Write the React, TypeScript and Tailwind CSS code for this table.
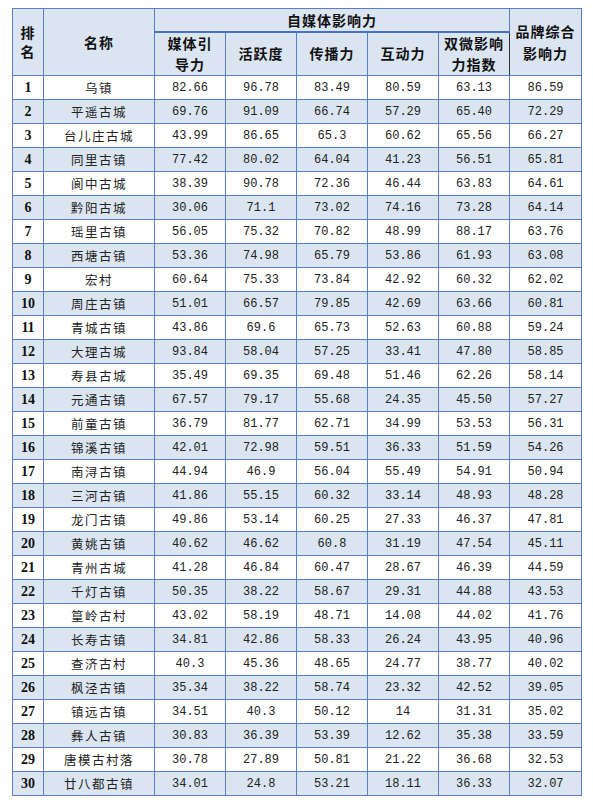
import React from "react";

const rows: [string, string, string, string, string, string, string][] = [
  ["乌镇", "82.66", "96.78", "83.49", "80.59", "63.13", "86.59"],
  ["平遥古城", "69.76", "91.09", "66.74", "57.29", "65.40", "72.29"],
  ["台儿庄古城", "43.99", "86.65", "65.3", "60.62", "65.56", "66.27"],
  ["同里古镇", "77.42", "80.02", "64.04", "41.23", "56.51", "65.81"],
  ["阆中古城", "38.39", "90.78", "72.36", "46.44", "63.83", "64.61"],
  ["黔阳古城", "30.06", "71.1", "73.02", "74.16", "73.28", "64.14"],
  ["瑶里古镇", "56.05", "75.32", "70.82", "48.99", "88.17", "63.76"],
  ["西塘古镇", "53.36", "74.98", "65.79", "53.86", "61.93", "63.08"],
  ["宏村", "60.64", "75.33", "73.84", "42.92", "60.32", "62.02"],
  ["周庄古镇", "51.01", "66.57", "79.85", "42.69", "63.66", "60.81"],
  ["青城古镇", "43.86", "69.6", "65.73", "52.63", "60.88", "59.24"],
  ["大理古城", "93.84", "58.04", "57.25", "33.41", "47.80", "58.85"],
  ["寿县古城", "35.49", "69.35", "69.48", "51.46", "62.26", "58.14"],
  ["元通古镇", "67.57", "79.17", "55.68", "24.35", "45.50", "57.27"],
  ["前童古镇", "36.79", "81.77", "62.71", "34.99", "53.53", "56.31"],
  ["锦溪古镇", "42.01", "72.98", "59.51", "36.33", "51.59", "54.26"],
  ["南浔古镇", "44.94", "46.9", "56.04", "55.49", "54.91", "50.94"],
  ["三河古镇", "41.86", "55.15", "60.32", "33.14", "48.93", "48.28"],
  ["龙门古镇", "49.86", "53.14", "60.25", "27.33", "46.37", "47.81"],
  ["黄姚古镇", "40.62", "46.62", "60.8", "31.19", "47.54", "45.11"],
  ["青州古城", "41.28", "46.84", "60.47", "28.67", "46.39", "44.59"],
  ["千灯古镇", "50.35", "38.22", "58.67", "29.31", "44.88", "43.53"],
  ["篁岭古村", "43.02", "58.19", "48.71", "14.08", "44.02", "41.76"],
  ["长寿古镇", "34.81", "42.86", "58.33", "26.24", "43.95", "40.96"],
  ["查济古村", "40.3", "45.36", "48.65", "24.77", "38.77", "40.02"],
  ["枫泾古镇", "35.34", "38.22", "58.74", "23.32", "42.52", "39.05"],
  ["镇远古镇", "34.51", "40.3", "50.12", "14", "31.31", "35.02"],
  ["彝人古镇", "30.83", "36.39", "53.39", "12.62", "35.38", "33.59"],
  ["唐模古村落", "30.78", "27.89", "50.81", "21.22", "36.68", "32.53"],
  ["廿八都古镇", "34.01", "24.8", "53.21", "18.11", "36.33", "32.07"],
];

const cjk = "font-['Noto_Sans_CJK_SC',sans-serif]";
const th = `border border-[#5a80c4] bg-[#dbe5f1] ${cjk} text-[14px] font-bold p-0 tracking-[1px] text-[#111]`;

export default function App() {
  return (
    <div className="bg-white w-[593px] h-[806px] pt-[8px] pl-[12px]">
      <table className="table-fixed border-collapse w-[569px]">
        <colgroup>
          <col className="w-[31px]" />
          <col className="w-[111px]" />
          <col className="w-[71px]" />
          <col className="w-[71px]" />
          <col className="w-[71px]" />
          <col className="w-[71px]" />
          <col className="w-[71px]" />
          <col className="w-[72px]" />
        </colgroup>
        <thead>
          <tr className="h-[23px]">
            <th rowSpan={2} className={`${th} leading-[19px]`}>
              排<br />名
            </th>
            <th rowSpan={2} className={th}>
              名称
            </th>
            <th colSpan={5} className={`${th} border-b-2 border-b-[#4472c4] leading-[20px]`}>
              自媒体影响力
            </th>
            <th rowSpan={2} className={`${th} border-l-[#333] leading-[22px]`}>
              品牌综合<br />影响力
            </th>
          </tr>
          <tr className="h-[44px]">
            <th className={`${th} leading-[21px]`}>
              媒体引<br />导力
            </th>
            <th className={th}>活跃度</th>
            <th className={th}>传播力</th>
            <th className={th}>互动力</th>
            <th className={`${th} leading-[21px]`}>
              双微影响<br />力指数
            </th>
          </tr>
        </thead>
        <tbody>
          {rows.map((r, i) => (
            <tr key={i} className={`h-[24px] ${i % 2 === 1 ? "bg-[#dbe5f1]" : "bg-white"}`}>
              <td className="border border-[#5a80c4] text-center p-0 font-['Liberation_Serif',serif] font-bold text-[14px] leading-[22px] text-[#111]">
                {i + 1}
              </td>
              <td className={`border border-[#5a80c4] text-center p-0 ${cjk} text-[12.5px] tracking-[1.5px] leading-[22px] text-[#222]`}>
                {r[0]}
              </td>
              {r.slice(1).map((v, j) => (
                <td
                  key={j}
                  className="border border-[#5a80c4] text-center p-0 font-['Liberation_Mono',monospace] text-[12px] leading-[22px] text-[#222]"
                >
                  {v}
                </td>
              ))}
            </tr>
          ))}
        </tbody>
      </table>
    </div>
  );
}
